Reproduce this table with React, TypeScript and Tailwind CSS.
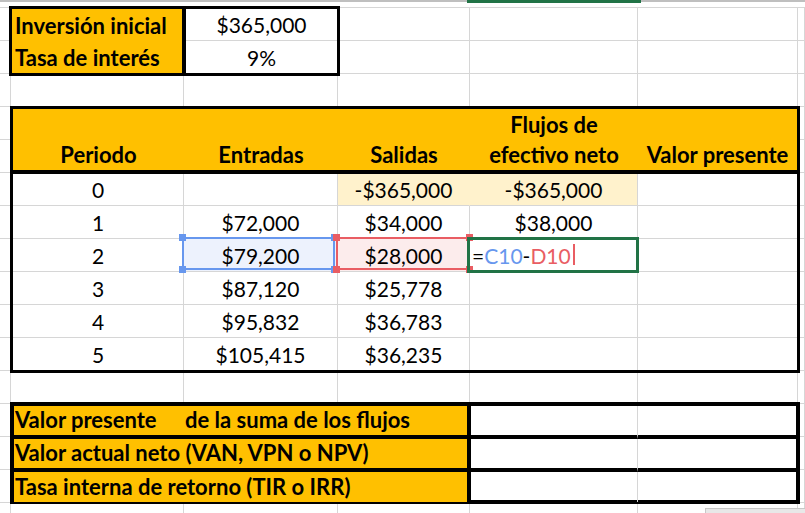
import React from "react";

const rowStart = [
  "row-start-1",
  "row-start-2",
  "row-start-3",
  "row-start-4",
  "row-start-5",
  "row-start-6",
  "row-start-7",
  "row-start-8",
  "row-start-9",
  "row-start-10",
  "row-start-11",
  "row-start-12",
  "row-start-13",
  "row-start-14",
  "row-start-15",
  "row-start-16",
  "row-start-17",
];
const colStart = [
  "col-start-1",
  "col-start-2",
  "col-start-3",
  "col-start-4",
  "col-start-5",
  "col-start-6",
  "col-start-7",
];

const rows = [
  { p: "0", e: "", s: "-$365,000", f: "-$365,000" },
  { p: "1", e: "$72,000", s: "$34,000", f: "$38,000" },
  { p: "2", e: "$79,200", s: "$28,000", f: "" },
  { p: "3", e: "$87,120", s: "$25,778", f: "" },
  { p: "4", e: "$95,832", s: "$36,783", f: "" },
  { p: "5", e: "$105,415", s: "$36,235", f: "" },
];

const Corners = ({ color }: { color: string }) => (
  <>
    <span className={`absolute -left-[5px] -top-[5px] size-[7px] ${color}`} />
    <span className={`absolute -right-[5px] -top-[5px] size-[7px] ${color}`} />
    <span className={`absolute -left-[5px] -bottom-[5px] size-[7px] ${color}`} />
    <span className={`absolute -right-[5px] -bottom-[5px] size-[7px] ${color}`} />
  </>
);

const Gridlines = () => {
  const cells = [];
  for (let r = 1; r < 16; r++) {
    for (let c = 0; c < 7; c++) {
      cells.push(
        <div
          key={`${r}-${c}`}
          className={`${rowStart[r]} ${colStart[c]} border-r border-b border-[#d6d6d6]`}
        />
      );
    }
  }
  for (let c = 0; c < 7; c++) {
    cells.push(
      <div key={`last-${c}`} className={`${rowStart[16]} ${colStart[c]} border-r border-[#d6d6d6]`} />
    );
  }
  return <>{cells}</>;
};

const App = () => {
  return (
    <div className="grid h-[513px] w-[805px] overflow-hidden bg-white font-['Lato',sans-serif] text-[21px] leading-[30px] text-black grid-cols-[11px_173px_154px_132px_168px_160px_1fr] grid-rows-[8px_repeat(15,33px)_1fr]">
      {/* column header edge */}
      <div className="row-start-1 col-start-1 col-end-8 border-t-2 border-b border-t-[#bfbfbf] border-b-[#d6d6d6]" />
      <div className="row-start-1 col-start-5 -mx-[3px] h-[3px] self-start bg-[#217346]" />
      <Gridlines />

      {/* inversión / tasa */}
      <div className="row-start-2 row-end-4 col-start-2 col-end-4 -m-[2px] grid grid-cols-[174px_1fr] grid-rows-2 border-[3px] border-black">
        <div className="flex items-end border-r-4 border-black bg-[#ffc000] pl-[3px] text-[22px] font-bold">Inversión inicial</div>
        <div className="flex items-end justify-center border-b border-[#d6d6d6]">$365,000</div>
        <div className="flex items-end border-r-4 border-black bg-[#ffc000] pl-[3px] text-[22px] font-bold">Tasa de interés</div>
        <div className="flex items-end justify-center">9%</div>
      </div>

      {/* flujos table */}
      <div className="row-start-5 row-end-13 col-start-2 col-end-7 -mt-[1px] -mb-[2px] -ml-[1px] -mr-[2px] grid grid-cols-[171px_154px_132px_168px_1fr] grid-rows-[65px_32px_33px_33px_33px_33px_1fr] border-[3px] border-black">
        {["Periodo", "Entradas", "Salidas", "Flujos de efectivo neto", "Valor presente"].map((h) => (
          <div
            key={h}
            className="flex items-end justify-center border-b-4 border-black bg-[#ffc000] text-center text-[22px] font-bold whitespace-nowrap"
          >
            {h === "Flujos de efectivo neto" ? (
              <span>
                Flujos de
                <br />
                efectivo neto
              </span>
            ) : (
              h
            )}
          </div>
        ))}
        {rows.map((r, i) => {
          const bb = i === rows.length - 1 ? "" : "border-b";
          const selected = i === 2;
          return (
            <React.Fragment key={r.p}>
              <div className={`flex items-end justify-center border-r border-[#d6d6d6] ${bb}`}>{r.p}</div>
              <div
                className={`relative flex items-end justify-center border-r border-[#d6d6d6] ${bb} ${
                  selected ? "bg-[#edf2fd]" : ""
                }`}
              >
                {selected && (
                  <div className="absolute -left-[2px] -top-[2px] right-[2px] bottom-[1px] z-10 border-2 border-[#6797ee]">
                    <Corners color="bg-[#6797ee]" />
                  </div>
                )}
                {r.e}
              </div>
              <div
                className={`relative flex items-end justify-center border-r ${bb} ${
                  i === 0
                    ? "bg-[#fff2cc] border-r-[#fff2cc] border-b-[#d6d6d6]"
                    : selected
                    ? "bg-[#fcecec] border-[#d6d6d6]"
                    : "border-[#d6d6d6]"
                }`}
              >
                {selected && (
                  <div className="absolute -left-[2px] -top-[2px] -right-[1px] bottom-[1px] z-10 border-2 border-[#e95d63]">
                    <Corners color="bg-[#e95d63]" />
                  </div>
                )}
                {r.s}
              </div>
              <div
                className={`relative flex items-end border-r border-[#d6d6d6] ${bb} ${
                  i === 0 ? "bg-[#fff2cc]" : ""
                } ${selected ? "justify-start pl-[2px]" : "justify-center"}`}
              >
                {selected ? (
                  <>
                    <div className="absolute -left-[3px] -top-[2px] -right-[2px] -bottom-[2px] z-20 border-[3px] border-[#217346]" />
                    <span>=</span>
                    <span className="text-[#6797ee]">C10</span>
                    <span>-</span>
                    <span className="text-[#e95d63]">D10</span>
                    <span className="mb-[6px] ml-[2px] h-[21px] w-[2px] bg-[#e95d63]" />
                  </>
                ) : (
                  r.f
                )}
              </div>
              <div className={`border-[#d6d6d6] ${bb}`} />
            </React.Fragment>
          );
        })}
      </div>

      {/* resumen */}
      <div className="row-start-14 row-end-17 col-start-2 col-end-7 -mt-[2px] -mb-[1px] -ml-[1px] -mr-[2px] grid grid-cols-[457px_167px_1fr] grid-rows-[33px_33px_1fr] border-4 border-black text-[22px]">
        <div className="flex items-end border-r-4 border-b-4 border-black bg-[#ffc000] pl-[1px] font-bold whitespace-nowrap">
          <span className="w-[170px]">Valor presente</span>
          <span>de la suma de los flujos</span>
        </div>
        <div className="border-r border-b-4 border-r-[#d6d6d6] border-b-black" />
        <div className="border-b-4 border-black" />
        <div className="flex items-end border-r-4 border-b-4 border-black bg-[#ffc000] pl-[1px] font-bold whitespace-nowrap">
          Valor actual neto (VAN, VPN o NPV)
        </div>
        <div className="border-r border-b-4 border-r-[#d6d6d6] border-b-black" />
        <div className="border-b-4 border-black" />
        <div className="flex items-end border-r-4 border-black bg-[#ffc000] pl-[1px] font-bold whitespace-nowrap">
          Tasa interna de retorno (TIR o IRR)
        </div>
        <div className="border-r border-[#d6d6d6]" />
        <div />
      </div>

      {/* scrollbar edge */}
      <div className="row-start-17 col-start-6 col-end-8 h-[5px] w-[100px] self-end justify-self-end border-t border-l border-[#c8c8c8] bg-[#e8e8e8]" />
    </div>
  );
};

export default App;
